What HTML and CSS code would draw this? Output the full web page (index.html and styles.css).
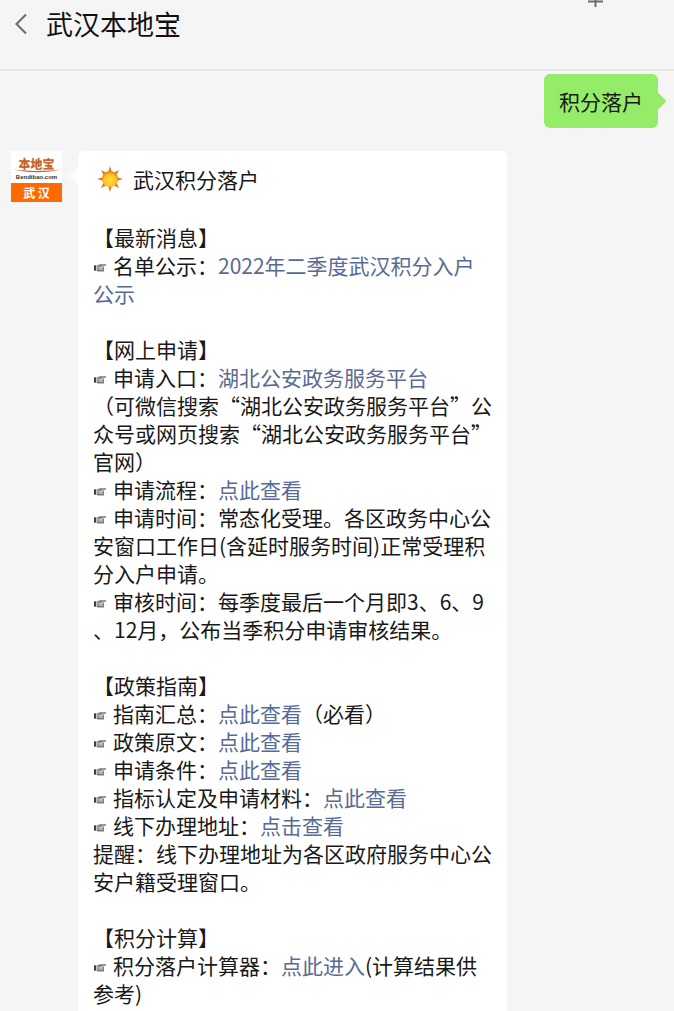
FILE: index.html
```html
<!DOCTYPE html>
<html lang="zh-CN">
<head>
    <meta charset="UTF-8">
    <meta name="viewport" content="width=device-width, initial-scale=1.0">
    <title>武汉本地宝</title>
    <link rel="stylesheet" href="styles.css">
</head>
<body>
    <svg class="defs" width="0" height="0">
        <defs>
            <symbol id="hand" viewBox="0 0 14 10">
                <path d="M1 2.500h3.500l2-1.200h6.500v1.400H9.200v.7h1.800v5H4.500L3.600 7.600H1z" fill="#7a7a7a"/>
                <path d="M2 3.600h2v3H2zM5.500 4.200h4.600M5.500 6h4.600" fill="none" stroke="#f2f2f2" stroke-width="0.9"/>
                <path d="M1 2.500h2v5.100H1z" fill="#3f3f3f"/>
            </symbol>
        </defs>
    </svg>

    <div class="header">
        <svg class="back" width="14" height="22" viewBox="0 0 14 22">
            <path d="M12 1.500 2.500 11l9.500 9.500" fill="none" stroke="#6a6a6a" stroke-width="2"/>
        </svg>
        <div class="header-title">武汉本地宝</div>
        <svg class="plus" width="15" height="7" viewBox="0 0 15 7">
            <path d="M0 1.500h15M7.500 0v7" fill="none" stroke="#6f6f6f" stroke-width="2"/>
        </svg>
    </div>

    <div class="messages">
        <div class="row row-me">
            <div class="bubble-me">积分落户</div>
        </div>

        <div class="row row-them">
            <div class="avatar">
                <div class="avatar-top">
                    <div class="avatar-name">本地宝</div>
                    <svg class="avatar-swoosh" width="48" height="4" viewBox="0 0 48 4">
                        <path d="M0 .6C13 4 35 4 48 .6 35 2.400 13 2.400 0 .6z" fill="#c8632a"/>
                    </svg>
                    <div class="avatar-url">Bendibao.com</div>
                </div>
                <div class="avatar-bottom">武 汉</div>
            </div>

            <div class="bubble">
                <div class="title-line">
                    <svg class="sun" width="26" height="26" viewBox="0 0 26 26">
                        <defs>
                            <radialGradient id="sun-core" cx="50%" cy="60%" r="55%">
                                <stop offset="0" stop-color="#ffe14a"/>
                                <stop offset="0.7" stop-color="#fdc11d"/>
                                <stop offset="1" stop-color="#e98a10"/>
                            </radialGradient>
                        </defs>
                        <path d="M13 0l1.800 6h-3.600zM13 26l-1.800-6h3.600zM0 13l6-1.800v3.600zM26 13l-6 1.800v-3.600zM4 4l5 2.400-2.600 2.600zM22 4l-2.400 5-2.600-2.600zM4 22l2.400-5 2.600 2.600zM22 22l-5-2.400 2.600-2.600z" fill="#d9772c"/>
                        <circle cx="13" cy="13" r="8" fill="url(#sun-core)"/>
                    </svg>
                    <span>武汉积分落户</span>
                </div>

                <div class="blank"></div>

                <div class="section">
                    <div>【最新消息】</div>
                    <div><svg class="hand"><use href="#hand"/></svg>名单公示：<a href="#">2022年二季度武汉积分入户<br>公示</a></div>
                </div>

                <div class="section">
                    <div>【网上申请】</div>
                    <div><svg class="hand"><use href="#hand"/></svg>申请入口：<a href="#">湖北公安政务服务平台</a></div>
                    <div>（可微信搜索“湖北公安政务服务平台”公<br>众号或网页搜索“湖北公安政务服务平台”<br>官网）</div>
                    <div><svg class="hand"><use href="#hand"/></svg>申请流程：<a href="#">点此查看</a></div>
                    <div><svg class="hand"><use href="#hand"/></svg>申请时间：常态化受理。各区政务中心公<br>安窗口工作日(含延时服务时间)正常受理积<br>分入户申请。</div>
                    <div><svg class="hand"><use href="#hand"/></svg>审核时间：每季度最后一个月即3、6、9<br>、12月，公布当季积分申请审核结果。</div>
                </div>

                <div class="section">
                    <div>【政策指南】</div>
                    <div><svg class="hand"><use href="#hand"/></svg>指南汇总：<a href="#">点此查看</a>（必看）</div>
                    <div><svg class="hand"><use href="#hand"/></svg>政策原文：<a href="#">点此查看</a></div>
                    <div><svg class="hand"><use href="#hand"/></svg>申请条件：<a href="#">点此查看</a></div>
                    <div><svg class="hand"><use href="#hand"/></svg>指标认定及申请材料：<a href="#">点此查看</a></div>
                    <div><svg class="hand"><use href="#hand"/></svg>线下办理地址：<a href="#">点击查看</a></div>
                    <div>提醒：线下办理地址为各区政府服务中心公<br>安户籍受理窗口。</div>
                </div>

                <div class="section section-last">
                    <div>【积分计算】</div>
                    <div><svg class="hand"><use href="#hand"/></svg>积分落户计算器：<a href="#">点此进入</a>(计算结果供<br>参考)</div>
                </div>
            </div>
        </div>
    </div>
</body>
</html>
```

FILE: styles.css
```css
html, body {
    height: 1011px;
    overflow: hidden;
}
body {
    margin: 0;
    background-color: #f5f5f5;
    color: #191919;
    font-family: "Noto Sans CJK SC", "Liberation Sans", sans-serif;
    font-size: 21px;
    line-height: 28px;
}
.defs {
    display: block;
}

/* header */
.header {
    display: flex;
    align-items: flex-start;
    height: 69px;
    border-bottom: 2px solid #e8e8e8;
}
.back {
    margin: 13px 0 0 14px;
}
.header-title {
    margin: 5px 0 0 18px;
    font-size: 27px;
    line-height: 38px;
    color: #111;
}
.plus {
    margin-left: auto;
    margin-right: 71px;
}

/* messages */
.messages {
    height: 940px;
    overflow: hidden;
}
.row {
    display: flex;
}
.row-me {
    justify-content: flex-end;
    padding: 3px 16px 0 0;
}
.row-them {
    gap: 16px;
    padding: 23px 0 0 11px;
}
.bubble-me {
    position: relative;
    padding: 13px 15px;
    background-color: #95ec69;
    border-radius: 6px;
}
.bubble-me::after {
    content: "";
    position: absolute;
    top: 21px;
    right: -6px;
    width: 12px;
    height: 12px;
    background-color: #95ec69;
    transform: rotate(45deg);
}
.bubble {
    position: relative;
    box-sizing: border-box;
    width: 429px;
    height: 860px;
    padding: 13px 14px 0 15px;
    background-color: #fff;
    border-radius: 6px 6px 0 0;
}
.bubble::before {
    content: "";
    position: absolute;
    top: 19px;
    left: -6px;
    width: 12px;
    height: 12px;
    background-color: #fff;
    transform: rotate(45deg);
}
.title-line {
    display: flex;
    align-items: center;
    gap: 10px;
    height: 30px;
    padding-bottom: 1px;
    padding-left: 4px;
}
.sun {
    flex: none;
}
.blank {
    height: 28px;
}
.section {
    margin-bottom: 28px;
    white-space: nowrap;
}
.section-last {
    margin-bottom: 0;
}
.section a {
    color: #576b95;
    text-decoration: none;
}
.hand {
    width: 14px;
    height: 10px;
    margin-right: 6px;
    vertical-align: 1px;
}

/* avatar */
.avatar {
    flex: none;
    width: 51px;
    height: 51px;
    background-color: #fff;
}
.avatar-top {
    display: flex;
    flex-direction: column;
    align-items: center;
    height: 32px;
}
.avatar-name {
    margin-top: 7px;
    font-size: 12px;
    font-weight: 900;
    line-height: 12px;
    color: #c8632a;
}
.avatar-swoosh {
    display: block;
    margin-top: -1px;
}
.avatar-url {
    margin-top: 1px;
    font-family: "Liberation Sans", sans-serif;
    font-size: 6px;
    font-weight: 700;
    line-height: 7px;
    color: #333;
}
.avatar-bottom {
    height: 19px;
    background-color: #ff6a00;
    color: #fff;
    font-size: 12px;
    font-weight: 700;
    line-height: 19px;
    text-align: center;
}
```
